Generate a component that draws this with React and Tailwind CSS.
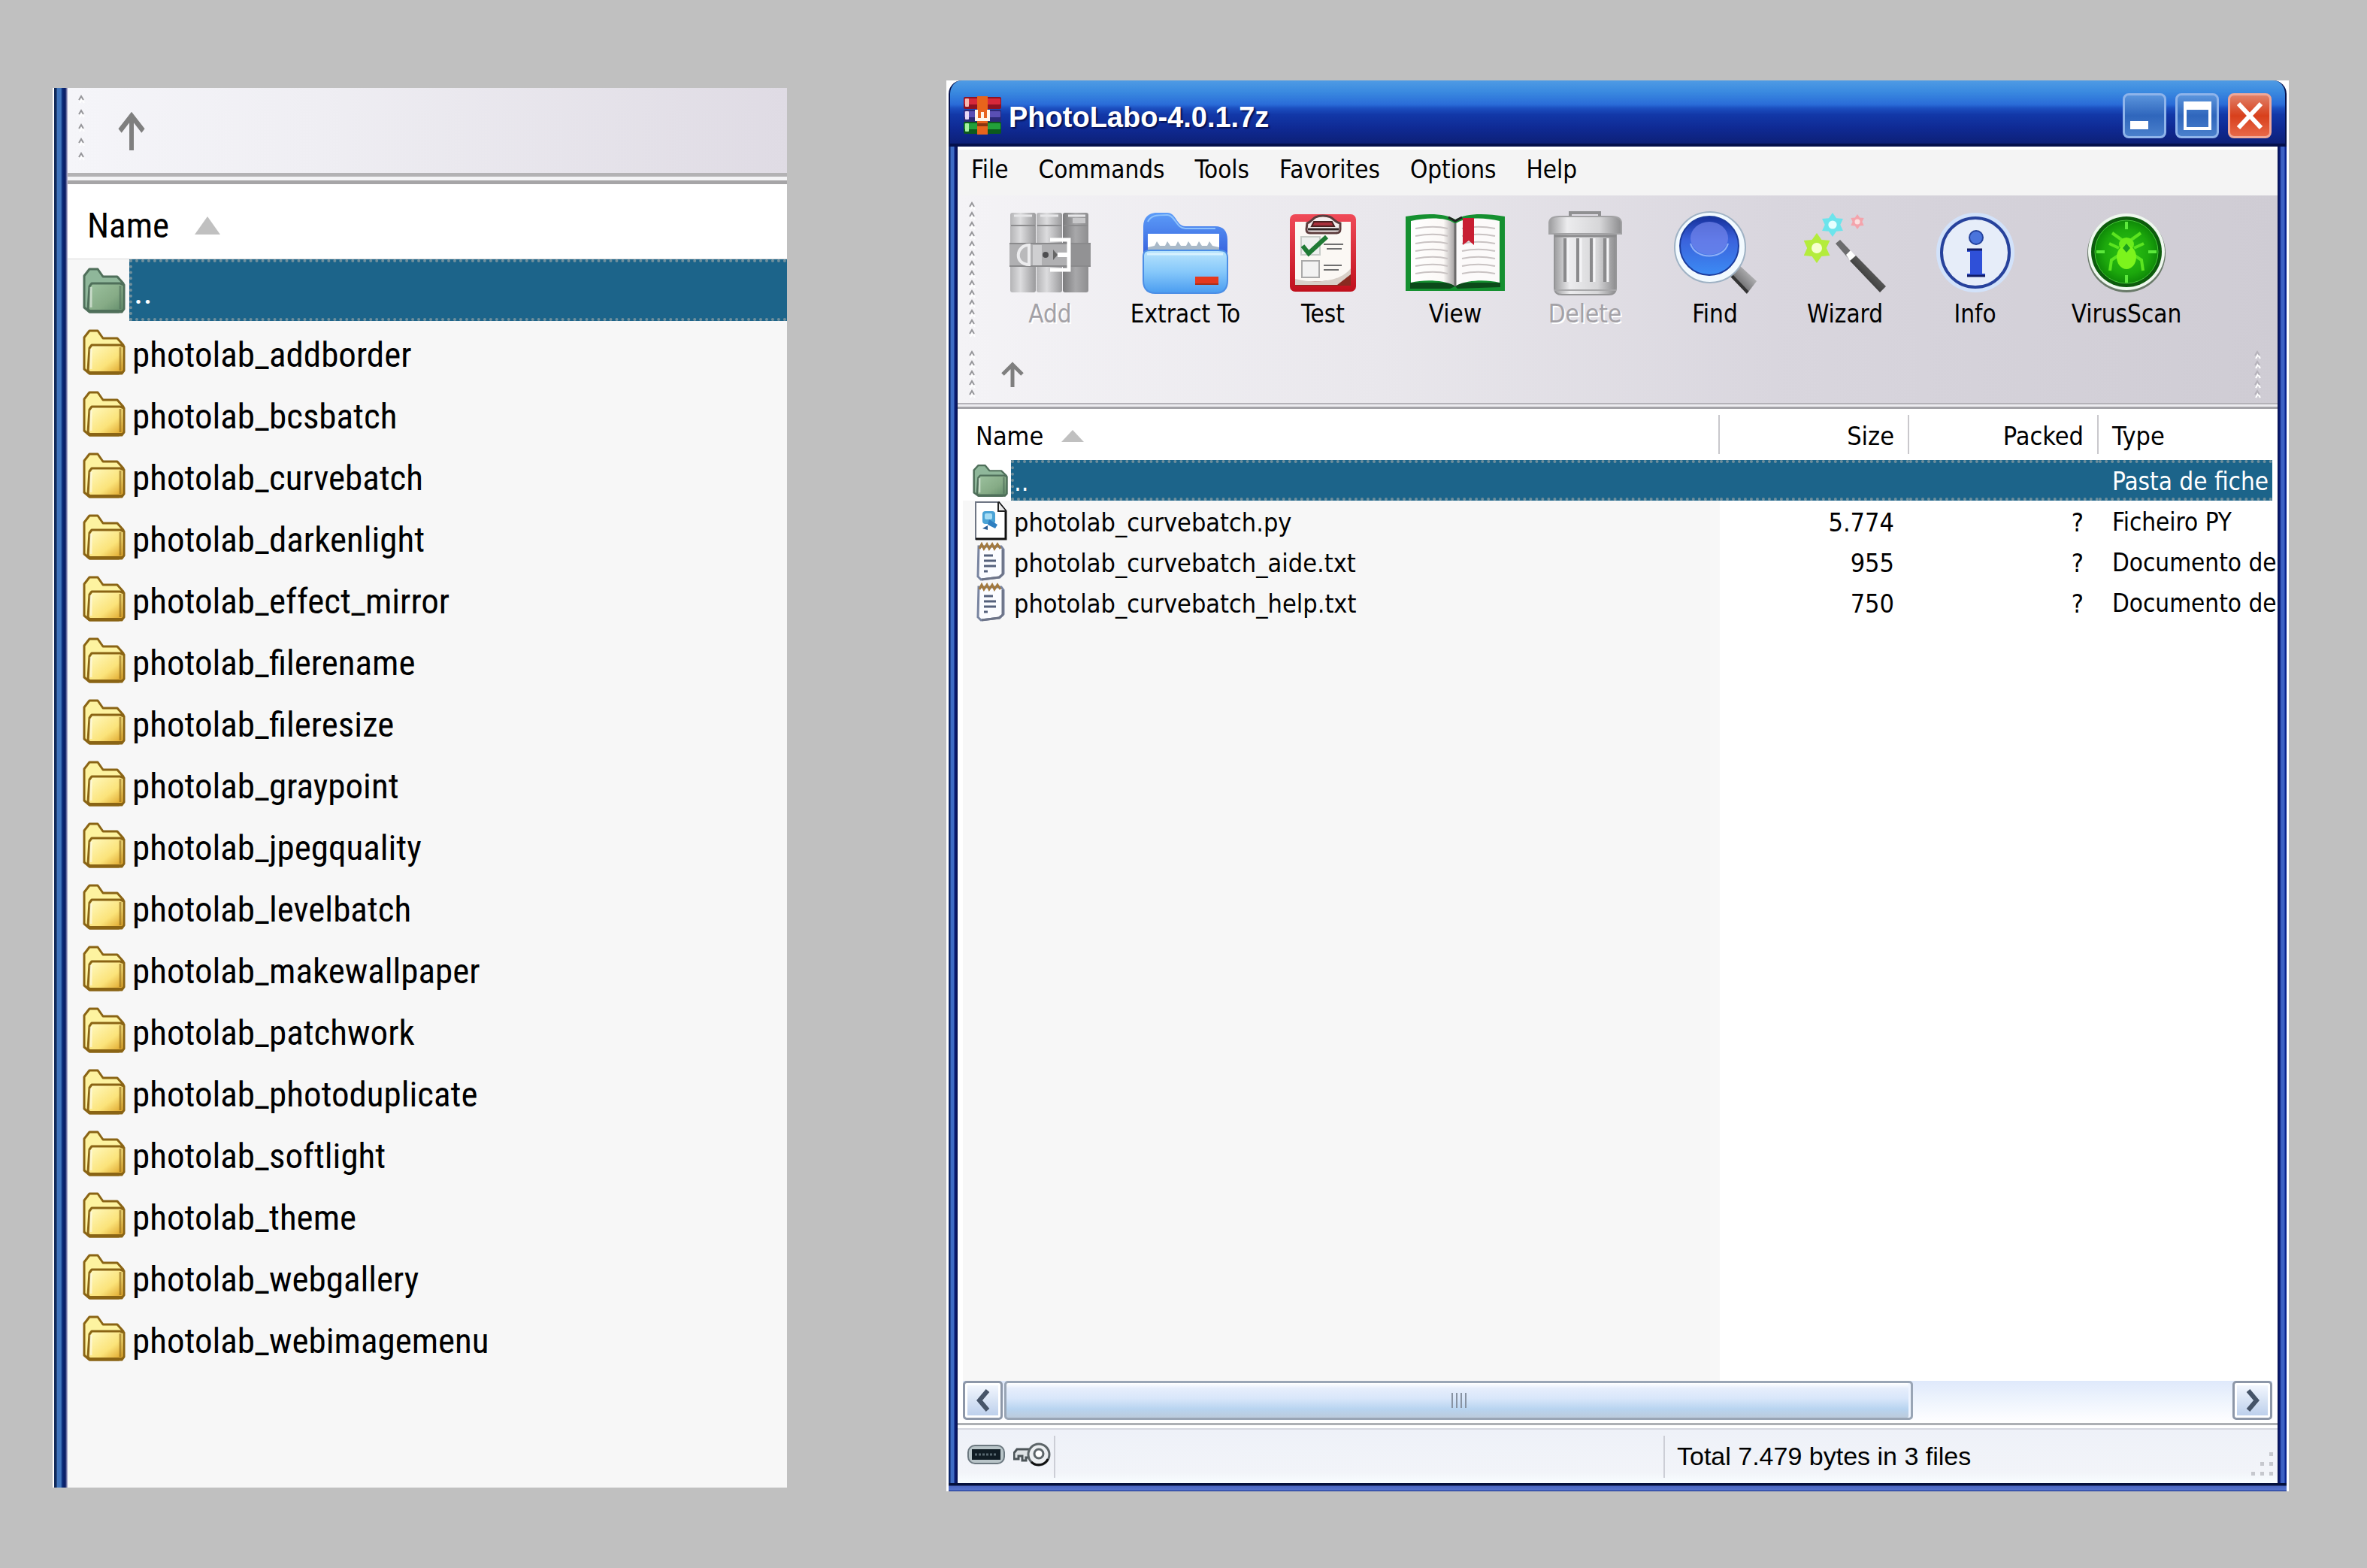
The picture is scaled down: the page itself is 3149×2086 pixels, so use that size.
import React from 'react';

const folders = [
    'photolab_addborder',
    'photolab_bcsbatch',
    'photolab_curvebatch',
    'photolab_darkenlight',
    'photolab_effect_mirror',
    'photolab_filerename',
    'photolab_fileresize',
    'photolab_graypoint',
    'photolab_jpegquality',
    'photolab_levelbatch',
    'photolab_makewallpaper',
    'photolab_patchwork',
    'photolab_photoduplicate',
    'photolab_softlight',
    'photolab_theme',
    'photolab_webgallery',
    'photolab_webimagemenu',
];

const files = [
    { name: 'photolab_curvebatch.py', size: '5.774', type: 'Ficheiro PY', icon: PyIcon },
    { name: 'photolab_curvebatch_aide.txt', size: '955', type: 'Documento de', icon: TxtIcon },
    { name: 'photolab_curvebatch_help.txt', size: '750', type: 'Documento de', icon: TxtIcon },
];

const menus = ['File', 'Commands', 'Tools', 'Favorites', 'Options', 'Help'];

const tools = [
    { label: 'Add', icon: AddIcon, width: 'w-[174px]', disabled: true },
    { label: 'Extract To', icon: ExtractIcon, width: 'w-[186px]' },
    { label: 'Test', icon: TestIcon, width: 'w-[180px]' },
    { label: 'View', icon: ViewIcon, width: 'w-[172px]' },
    { label: 'Delete', icon: DeleteIcon, width: 'w-[173px]', disabled: true },
    { label: 'Find', icon: FindIcon, width: 'w-[173px]' },
    { label: 'Wizard', icon: WizardIcon, width: 'w-[173px]' },
    { label: 'Info', icon: InfoIcon, width: 'w-[173px]' },
    { label: 'VirusScan', icon: VirusIcon, width: 'w-[230px]' },
];

/* ---------- Icons ---------- */

function FolderIcon({ green, width, height }) {
    const id = green ? 'folder-green' : 'folder-yellow';
    const line = green ? '#4f6f5a' : '#8a6414';
    return (
        <svg width={width} height={height} viewBox="0 0 58 62" preserveAspectRatio="none" className="shrink-0">
            <defs>
                <linearGradient id={`${id}-${width}`} x1="0" y1="0" x2="1" y2="1">
                    <stop offset="0" stopColor={green ? '#9dc3a0' : '#fffbc4'} />
                    <stop offset="0.6" stopColor={green ? '#86ab86' : '#fbe37a'} />
                    <stop offset="1" stopColor={green ? '#5f8a68' : '#d99a1c'} />
                </linearGradient>
            </defs>
            <path
                d="M2 54V12L9 3H20L27 13H46L54 22V54L48 60H9Z"
                fill={green ? '#8fb79a' : '#fdf3a0'}
                stroke={line}
                strokeWidth="3"
                strokeLinejoin="round"
            />
            <path
                d="M9 26L12 22H50L55 24V56L52 60H10L7 56Z"
                fill={`url(#${id}-${width})`}
                stroke={line}
                strokeWidth="3"
                strokeLinejoin="round"
            />
            <path d="M50 25V56" stroke={line} strokeWidth="3" opacity="0.6" />
            <path d="M8 59H53" stroke={line} strokeWidth="4" />
            <path d="M11 54V27" stroke="#fff" strokeWidth="3" opacity="0.5" />
        </svg>
    );
}

function PyIcon() {
    return (
        <svg width="44" height="52" viewBox="0 0 44 52" className="shrink-0">
            <path d="M2 1H33L42 12V50H2Z" fill="#fff" stroke="#6f7684" strokeWidth="2" />
            <path d="M32 1L42 13V50H2" fill="none" stroke="#111" strokeWidth="3" />
            <path d="M32 1V13H42" fill="#e8e8e8" stroke="#222" strokeWidth="2" />
            <rect x="11" y="13" width="17" height="17" rx="4" fill="#4aa3d6" />
            <rect x="14" y="16" width="10" height="8" rx="2" fill="#a5dcf4" />
            <path d="M20 24L31 31L28 36L18 31Z" fill="#2f7fc0" />
            <path d="M11 36L18 32V38Z" fill="#2a5d94" />
        </svg>
    );
}

function TxtIcon() {
    return (
        <svg width="44" height="52" viewBox="0 0 44 52" className="shrink-0">
            <path d="M6 6H36L39 10V42L34 47L9 50L5 46Z" fill="#fbfcff" stroke="#7884a0" strokeWidth="3" />
            <path d="M38 10V43L33 47L10 50" fill="none" stroke="#6d7488" strokeWidth="3" />
            <path d="M7 9L10 3L13 9L17 3L20 9L24 3L27 9L31 3L35 9" fill="none" stroke="#a3793d" strokeWidth="3" />
            <path d="M13 18H25M13 25H29M13 32H29M13 39H18" stroke="#55617c" strokeWidth="3" />
        </svg>
    );
}

function UpArrow({ width, height }) {
    return (
        <svg width={width} height={height} viewBox="0 0 32 34" preserveAspectRatio="none">
            <path d="M16 34V4M3 17L16 4L29 17" fill="none" stroke="#7f7f7f" strokeWidth="5" />
        </svg>
    );
}

function SortArrow({ width, height }) {
    return (
        <svg width={width} height={height} viewBox="0 0 32 16" preserveAspectRatio="none">
            <path d="M16 0L32 16H0Z" fill="#c0c0c0" />
        </svg>
    );
}

function Grip({ count, pitch, light }) {
    return (
        <svg width="10" height={count * pitch} className="shrink-0">
            {Array.from({ length: count }, (_, i) => (
                <g key={i} transform={`translate(0 ${i * pitch})`}>
                    <path d="M2 8L5 3L8 8" fill="none" stroke="#fff" strokeWidth="2" transform="translate(1 3)" />
                    <path d="M2 7L5 2L8 7" fill="none" stroke={light ? '#b5b2ba' : '#96969a'} strokeWidth="2" />
                </g>
            ))}
        </svg>
    );
}

function RarIcon() {
    const books = [
        { y: 1, dark: '#8e1222', mid: '#d8283a', tip: '#f7b9b0' },
        { y: 18, dark: '#2c2a78', mid: '#5a4fb4', tip: '#e8d8f4' },
        { y: 34, dark: '#0c5a1c', mid: '#23a03a', tip: '#a8f0a0' },
    ];
    return (
        <svg width="52" height="52" viewBox="0 0 52 52" className="shrink-0">
            {books.map(b => (
                <g key={b.y}>
                    <rect x="1" y={b.y} width="50" height="16" rx="2" fill={b.dark} />
                    <rect x="2" y={b.y + 2} width="48" height="8" rx="1" fill={b.mid} />
                    <rect x="3" y={b.y + 2} width="5" height="11" rx="1" fill={b.tip} />
                </g>
            ))}
            <rect x="19" y="0" width="14" height="51" fill="#e8641c" />
            <rect x="19" y="36" width="14" height="4" fill="#8a3510" />
            <path d="M18 18V31H34V18M26 21V31" fill="none" stroke="#fff6e8" strokeWidth="4" />
        </svg>
    );
}

function AddIcon() {
    return (
        <svg width="108" height="108" viewBox="0 0 108 108">
            <defs>
                <linearGradient id="book-a">
                    <stop offset="0" stopColor="#b4b4b6" />
                    <stop offset="0.4" stopColor="#dcdcde" />
                    <stop offset="1" stopColor="#9a9a9c" />
                </linearGradient>
                <linearGradient id="book-b">
                    <stop offset="0" stopColor="#7c7c7e" />
                    <stop offset="0.5" stopColor="#a8a8aa" />
                    <stop offset="1" stopColor="#8e8e90" />
                </linearGradient>
            </defs>
            <rect x="1" y="1" width="34" height="106" rx="3" fill="url(#book-a)" />
            <rect x="36" y="1" width="34" height="106" rx="3" fill="url(#book-a)" />
            <rect x="71" y="1" width="34" height="106" rx="3" fill="url(#book-b)" />
            <path d="M6 5H30M41 5H65M78 5H101" stroke="#e6e6e8" strokeWidth="3" />
            <path d="M2 18H34M37 18H69M72 18H104" stroke="#8c8c8e" strokeWidth="2" />
            <path d="M84 8H101V15H84Z" fill="#c8c8ca" />
            <rect x="0" y="41" width="108" height="32" fill="#b0b0b2" />
            <rect x="80" y="42" width="28" height="30" fill="#929294" />
            <path d="M0 42H108M0 72H108" stroke="#8a8a8c" strokeWidth="2" />
            <path d="M26 44C8 44 6 70 26 70Z" fill="#b9b9bb" stroke="#ececee" strokeWidth="4" />
            <rect x="31" y="44" width="12" height="27" fill="#cfcfd1" />
            <circle cx="48" cy="57" r="4" fill="#4e4e50" />
            <path d="M54 37H79V77H54" fill="none" stroke="#fff" strokeWidth="5" />
            <path d="M64 57H79" stroke="#fff" strokeWidth="6" />
            <path d="M58 50L64 57L58 64Z" fill="#666" />
        </svg>
    );
}

function ExtractIcon() {
    return (
        <svg width="116" height="110" viewBox="0 0 116 110">
            <defs>
                <linearGradient id="ex-back" x2="0" y2="1">
                    <stop offset="0" stopColor="#5c9cf8" />
                    <stop offset="1" stopColor="#2f55d8" />
                </linearGradient>
                <linearGradient id="ex-front" x2="0" y2="1">
                    <stop offset="0" stopColor="#b8e4fc" />
                    <stop offset="0.5" stopColor="#86c8fa" />
                    <stop offset="1" stopColor="#4a9cf0" />
                </linearGradient>
            </defs>
            <path d="M2 70V20C2 8 10 2 20 2H34C46 2 46 20 58 20H98C108 20 114 26 114 38V70Z" fill="url(#ex-back)" />
            <path d="M8 14C12 6 18 5 34 5C44 5 46 23 58 23H98" fill="none" stroke="#8ec2fc" strokeWidth="2" />
            <path d="M8 30H103V58H8Z" fill="#fff" />
            <path d="M8 52V48L17 46L20 40L24 46H31L34 40L38 46H45L48 40L52 46H59L62 40L66 46H73L76 40L80 46H87L90 40L94 46L103 48V52Z" fill="#a9b9c8" />
            <path d="M2 60C2 53 6 52 12 52H102C110 52 114 54 114 62V92C114 104 108 109 98 109H18C8 109 2 104 2 92Z" fill="url(#ex-front)" stroke="#4b8ee6" strokeWidth="2" />
            <path d="M7 57H108" stroke="#d8f2ff" strokeWidth="3" />
            <rect x="71" y="87" width="31" height="11" fill="#e4381e" />
            <path d="M71 97H102" stroke="#a8301c" strokeWidth="2" />
        </svg>
    );
}

function TestIcon() {
    return (
        <svg width="90" height="106" viewBox="0 0 90 106">
            <defs>
                <linearGradient id="clip-red" x2="0" y2="1">
                    <stop offset="0" stopColor="#f04a58" />
                    <stop offset="1" stopColor="#c0101c" />
                </linearGradient>
            </defs>
            <rect x="1" y="2" width="88" height="103" rx="7" fill="url(#clip-red)" />
            <path d="M8 12H82V78L62 96H8Z" fill="#fbf8f4" />
            <path d="M82 78C70 88 66 92 8 92V97H82Z" fill="#8a2a20" />
            <path d="M8 88C40 96 70 90 82 74V82L64 96H8Z" fill="#d8d0c8" />
            <rect x="16" y="32" width="25" height="24" fill="#eef0ee" stroke="#c8ccc8" strokeWidth="2" />
            <path d="M18 44L26 54L50 32" fill="none" stroke="#1f7a34" strokeWidth="6" />
            <rect x="17" y="64" width="23" height="22" fill="#f2f2f2" stroke="#aaa" strokeWidth="2" />
            <path d="M46 42H72M50 48H70M46 70H70M46 76H66" stroke="#6f6f6f" strokeWidth="2" />
            <path d="M24 14C32 12 30 4 45 4S58 12 68 14V22C68 26 66 27 62 27H30C24 27 23 26 23 22Z" fill="#f4eeee" stroke="#5c3c3c" strokeWidth="3" />
            <path d="M33 12H57L60 18H30Z" fill="#a8303c" stroke="#4a2020" strokeWidth="2" />
            <path d="M25 22H66" stroke="#2e2424" strokeWidth="3" />
        </svg>
    );
}

function ViewIcon() {
    const lines = [20, 30, 40, 50, 60, 70, 80];
    return (
        <svg width="134" height="104" viewBox="0 0 134 104">
            <defs>
                <linearGradient id="page-l">
                    <stop offset="0" stopColor="#fff" />
                    <stop offset="0.75" stopColor="#fbf8f6" />
                    <stop offset="1" stopColor="#a8a4a4" />
                </linearGradient>
            </defs>
            <path d="M1 4C30 -1 55 0 67 8C80 0 105 -1 133 4V103H1Z" fill="#159030" />
            <path d="M7 92H127V98L70 100L67 97L60 100H7Z" fill="#0c4a1a" />
            <path d="M8 10C30 5 55 5 66 13V96C50 88 25 88 8 92Z" fill="url(#page-l)" />
            <path d="M68 13C80 5 105 5 126 10V92C108 88 85 88 68 96Z" fill="#fcfafa" />
            <path d="M67 13V97" stroke="#6c6a6a" strokeWidth="3" />
            {lines.map(y => (
                <path key={y} d={`M14 ${y}C30 ${y - 3} 45 ${y - 3} 57 ${y}M76 ${y}C90 ${y - 3} 105 ${y - 3} 120 ${y}`} fill="none" stroke="#c9c3c3" strokeWidth="2" />
            ))}
            <path d="M58 5L67 10L76 5" fill="none" stroke="#222" strokeWidth="3" />
            <path d="M77 6H92V42L85 36L77 42Z" fill="#c81e32" />
        </svg>
    );
}

function DeleteIcon() {
    return (
        <svg width="98" height="114" viewBox="0 0 98 114">
            <defs>
                <linearGradient id="bin">
                    <stop offset="0" stopColor="#9c9c9e" />
                    <stop offset="0.25" stopColor="#ececee" />
                    <stop offset="0.7" stopColor="#d6d6d8" />
                    <stop offset="1" stopColor="#8c8c8e" />
                </linearGradient>
            </defs>
            <path d="M29 8V4H68V8" fill="none" stroke="#909092" strokeWidth="4" />
            <path d="M8 32H90V104C90 110 86 113 80 113H18C12 113 8 110 8 104Z" fill="url(#bin)" stroke="#949496" strokeWidth="2" />
            <path d="M1 32V18C1 11 6 9 14 9H84C92 9 97 11 97 18V32Z" fill="url(#bin)" stroke="#a2a2a4" strokeWidth="2" />
            <path d="M8 35H90" stroke="#8a8a8c" strokeWidth="3" />
            <path d="M22 38V96M39 38V96M57 38V96M75 38V96" stroke="#8a8a8c" strokeWidth="4" />
            <path d="M26 38V96M43 38V96M61 38V96M79 38V96" stroke="#f4f4f6" strokeWidth="3" />
            <path d="M8 107H90" stroke="#a8a8aa" strokeWidth="2" />
        </svg>
    );
}

function FindIcon() {
    return (
        <svg width="114" height="112" viewBox="0 0 114 112">
            <defs>
                <linearGradient id="lens" x2="0" y2="1">
                    <stop offset="0" stopColor="#16309c" />
                    <stop offset="0.4" stopColor="#3a62dc" />
                    <stop offset="1" stopColor="#3c8cf4" />
                </linearGradient>
                <linearGradient id="handle" x1="0" y1="1" x2="1" y2="0">
                    <stop offset="0" stopColor="#333" />
                    <stop offset="0.5" stopColor="#8a8a8c" />
                    <stop offset="1" stopColor="#dcdcde" />
                </linearGradient>
            </defs>
            <path d="M76 84L88 72L112 94L99 111Z" fill="url(#handle)" />
            <path d="M78 86L100 109" stroke="#333" strokeWidth="4" />
            <circle cx="50" cy="49" r="47" fill="#f2faff" stroke="#9fb2c4" strokeWidth="2" />
            <circle cx="49" cy="47" r="39" fill="url(#lens)" stroke="#1c3c9c" strokeWidth="2" />
            <ellipse cx="49" cy="37" rx="25" ry="22" fill="#7486ec" opacity="0.7" />
            <path d="M24 44C30 66 68 66 74 44" fill="none" stroke="#8fb0f8" strokeWidth="2" />
        </svg>
    );
}

function Star({ x, y, r, color, core }) {
    return (
        <g transform={`translate(${x} ${y}) scale(${r})`}>
            <path d="M0 -1L0.32 -0.55L0.87 -0.5L0.64 0L0.87 0.5L0.32 0.55L0 1L-0.32 0.55L-0.87 0.5L-0.64 0L-0.87 -0.5L-0.32 -0.55Z" fill={color} />
            <circle r="0.35" fill={core} />
        </g>
    );
}

function WizardIcon() {
    return (
        <svg width="110" height="108" viewBox="0 0 110 108">
            <defs>
                <linearGradient id="wand" x1="0" y1="1" x2="1" y2="0">
                    <stop offset="0" stopColor="#0c0c0c" />
                    <stop offset="1" stopColor="#8c8c8c" />
                </linearGradient>
            </defs>
            <Star x="17" y="48" r="20" color="#b4ec3c" core="#f6ffd0" />
            <Star x="38" y="17" r="16" color="#6ce4ec" core="#e4ffff" />
            <Star x="71" y="13" r="10" color="#f4a4ac" core="#fbe0e0" />
            <path d="M42 42L48 37L66 56L60 63Z" fill="#6c6c6e" />
            <path d="M56 57L62 51L69 59L62 66Z" fill="#fff" />
            <path d="M61 65L69 58L109 99L101 107Z" fill="url(#wand)" />
        </svg>
    );
}

function InfoIcon() {
    return (
        <svg width="106" height="108" viewBox="0 0 106 108">
            <ellipse cx="53" cy="54" rx="52" ry="53" fill="#d2e2fa" />
            <ellipse cx="53" cy="54" rx="45" ry="46" fill="#e6edf9" stroke="#27429c" strokeWidth="4" />
            <circle cx="54" cy="34" r="9" fill="#4a74dc" stroke="#24429c" strokeWidth="2" />
            <path d="M42 49H62V82H66V86H42V82H46V53H42Z" fill="#2f50d8" />
            <path d="M42 50H62M42 85H66" stroke="#101c68" strokeWidth="3" />
        </svg>
    );
}

function VirusIcon() {
    return (
        <svg width="106" height="108" viewBox="0 0 106 108">
            <defs>
                <radialGradient id="virus">
                    <stop offset="0" stopColor="#2cc414" />
                    <stop offset="0.7" stopColor="#1ca80c" />
                    <stop offset="1" stopColor="#0f8a08" />
                </radialGradient>
            </defs>
            <circle cx="53" cy="55" r="52" fill="#6a7a6a" />
            <circle cx="53" cy="53" r="51" fill="#eef8ee" />
            <circle cx="53" cy="53" r="47" fill="#0c5c0c" />
            <circle cx="53" cy="53" r="42" fill="url(#virus)" stroke="#46c438" strokeWidth="1" />
            <path d="M53 13V23M53 84V94M13 53H24M82 53H93" stroke="#5ce83c" strokeWidth="4" />
            <g fill="none" stroke="#5ce420" strokeWidth="4">
                <path d="M48 38L34 28M58 38L72 28M43 48L30 42M63 48L76 42M42 58L33 64L31 78M64 58L73 64L75 78" />
            </g>
            <ellipse cx="53" cy="43" rx="10" ry="9" fill="#6cec1c" />
            <ellipse cx="53" cy="60" rx="13" ry="16" fill="#7cf41c" />
            <path d="M53 42L58 48L53 54L48 48Z" fill="#1ca01c" />
        </svg>
    );
}

/* ---------- Left panel ---------- */

function FolderPanel() {
    return (
        <section className="mt-[10px] mb-[5px] flex min-w-0 overflow-hidden border-l-2 border-white bg-[#f7f7f7] font-['Roboto_Condensed',sans-serif] text-[47px]">
            <div className="w-[18px] shrink-0 bg-[linear-gradient(to_right,#10295a_0,#10295a_3px,#3f74bc_4px,#3f74bc_9px,#0a2a78_11px,#0a1c64_15px,#c9c4dc_18px)]" />
            <div className="min-w-0 flex-1">
                <div className="flex h-[113px] items-center bg-[linear-gradient(to_right,#f5f5f9,#efeef3_35%,#dfdbe4)] pl-[13px]">
                    <Grip count={5} pitch={19} />
                    <button aria-label="Up one level" className="ml-[43px]">
                        <UpArrow width={38} height={52} />
                    </button>
                </div>
                <div className="h-[15px] border-y-[5px] border-t-[#b3b2b4] border-b-[#a6a5a7] bg-[#f4f4f6]" />
                <table className="w-full table-fixed border-separate border-spacing-0">
                    <thead>
                        <tr className="bg-white">
                            <th className="h-[100px] border-b border-[#d8d8d8] p-0 pt-[10px] pl-[26px] text-left font-normal">
                                <div className="flex items-center gap-[34px] leading-[86px]">
                                    Name
                                    <SortArrow width={34} height={24} />
                                </div>
                            </th>
                        </tr>
                    </thead>
                    <tbody>
                        <tr>
                            <td className="p-0 pl-[20px]">
                                <div className="flex items-center">
                                    <FolderIcon green width={58} height={62} />
                                    <div className="ml-1 h-[82px] flex-1 border-y-4 border-l-4 border-dotted border-[#6f8f9c] bg-[#1c648a] pt-1 pl-0.5 leading-[70px] text-white">
                                        ..
                                    </div>
                                </div>
                            </td>
                        </tr>
                        {folders.map(name => (
                            <tr key={name}>
                                <td className="p-0 pl-[20px]">
                                    <div className="flex h-[82px] items-center">
                                        <FolderIcon width={58} height={62} />
                                        <span className="ml-2 pt-2 leading-[74px]">{name}</span>
                                    </div>
                                </td>
                            </tr>
                        ))}
                    </tbody>
                </table>
            </div>
        </section>
    );
}

/* ---------- Archive window ---------- */

function TitleBar() {
    return (
        <header className="flex h-[88px] items-center gap-[9px] rounded-t-[18px] border-x-2 border-b-4 border-[#04104c] bg-[linear-gradient(to_bottom,#4f9be4_0%,#3a8ae0_18%,#2a6cd8_38%,#1c4fc0_44%,#1238a8_54%,#0f2a94_75%,#0d2078_100%)] pt-[10px] pr-[18px] pl-[17px]">
            <RarIcon />
            <h1 className="flex-1 pt-1 font-['Liberation_Sans',Arial,sans-serif] text-[38px] leading-[48px] font-bold text-white [text-shadow:2px_2px_2px_#061050]">
                PhotoLabo-4.0.1.7z
            </h1>
            <div className="flex gap-[12px]">
                <button aria-label="Minimize" className="flex h-[60px] w-[58px] items-end rounded-[8px] border-[3px] border-[#8fb4ea] bg-[linear-gradient(to_bottom,#5a94dc,#2f66bc_50%,#4a80cc)] pb-[9px] pl-[7px]">
                    <span className="h-[11px] w-[24px] bg-white" />
                </button>
                <button aria-label="Maximize" className="flex h-[60px] w-[58px] items-center justify-center rounded-[8px] border-[3px] border-[#8fb4ea] bg-[linear-gradient(to_bottom,#5a94dc,#2f66bc_50%,#4a80cc)]">
                    <span className="h-[38px] w-[37px] border-4 border-t-[11px] border-white" />
                </button>
                <button aria-label="Close" className="flex h-[60px] w-[58px] items-center justify-center rounded-[8px] border-[3px] border-[#f0a898] bg-[linear-gradient(to_bottom,#e08068,#d8401c_50%,#e86848)]">
                    <svg width="36" height="38" viewBox="0 0 36 38">
                        <path d="M3 3L33 35M33 3L3 35" stroke="#fff" strokeWidth="6" />
                    </svg>
                </button>
            </div>
        </header>
    );
}

function ToolBar() {
    return (
        <div className="bg-[linear-gradient(to_right,#f4f3f6,#e9e7ec_32%,#d9d6de_62%,#cfccd4)]">
            <div className="flex h-[200px] gap-[12px] pl-[14px]">
                <div className="pt-[8px]">
                    <Grip count={14} pitch={13} />
                </div>
                <div className="flex">
                    {tools.map(({ label, icon: Icon, width, disabled }) => (
                        <button
                            key={label}
                            disabled={disabled}
                            className={`flex flex-col items-center pt-[20px] text-[33px] leading-[40px] ${width} ${disabled ? 'text-[#a3a1a6] [text-shadow:2px_2px_0_#fff]' : 'text-black'}`}
                        >
                            <span className="mb-[6px] flex h-[112px] items-center">
                                <Icon />
                            </span>
                            {label}
                        </button>
                    ))}
                </div>
            </div>
            <div className="flex h-[76px] items-center pr-[22px] pl-[14px]">
                <Grip count={5} pitch={13} />
                <button aria-label="Up one level" className="ml-[33px]">
                    <UpArrow width={32} height={34} />
                </button>
                <div className="ml-auto">
                    <Grip count={5} pitch={13} light />
                </div>
            </div>
            <div className="h-[8px] border-t-2 border-b-[3px] border-t-[#b4b2b8] border-b-[#a4a3a8] bg-[#ecebef]" />
        </div>
    );
}

function FileTable() {
    const head = 'my-2 flex h-[52px] items-center pt-1';
    const picked = 'h-[54px] border-y-4 border-dotted border-[#6f8f9c] bg-[#1c648a] p-0 pt-1 leading-[42px] text-white';
    const cell = 'h-[54px] p-0 pt-1 leading-[50px]';
    return (
        <div className="flex-1 px-[7px]">
            <table className="h-full w-full table-fixed border-separate border-spacing-0 text-[34px] whitespace-nowrap">
                <colgroup>
                    <col />
                    <col className="w-[252px]" />
                    <col className="w-[252px]" />
                    <col className="w-[231px]" />
                </colgroup>
                <thead>
                    <tr className="text-left">
                        <th className="h-[68px] p-0 font-normal">
                            <div className={`${head} gap-[24px] border-r-2 border-[#c9c8cc] pl-[17px]`}>
                                Name
                                <SortArrow width={30} height={16} />
                            </div>
                        </th>
                        <th className="p-0 font-normal">
                            <div className={`${head} justify-end border-r-2 border-[#c9c8cc] pr-[18px]`}>Size</div>
                        </th>
                        <th className="p-0 font-normal">
                            <div className={`${head} justify-end border-r-2 border-[#c9c8cc] pr-[18px]`}>Packed</div>
                        </th>
                        <th className="p-0 font-normal">
                            <div className={`${head} pl-[18px]`}>Type</div>
                        </th>
                    </tr>
                </thead>
                <tbody>
                    <tr>
                        <td className="p-0">
                            <div className="flex items-center pl-[13px]">
                                <FolderIcon green width={48} height={44} />
                                <div className="ml-[3px] h-[54px] flex-1 border-y-4 border-l-4 border-dotted border-[#6f8f9c] bg-[#1c648a] pt-1 leading-[42px] text-white">
                                    ..
                                </div>
                            </div>
                        </td>
                        <td className={picked}></td>
                        <td className={picked}></td>
                        <td className={`${picked} pl-[18px] text-[33px]`}>Pasta de fiche</td>
                    </tr>
                    {files.map(({ name, size, type, icon: Icon }) => (
                        <tr key={name}>
                            <td className="h-[54px] bg-[#f7f7f7] p-0">
                                <div className="flex h-[54px] items-center gap-[9px] pl-[15px]">
                                    <Icon />
                                    <span className="pt-1 leading-[50px]">{name}</span>
                                </div>
                            </td>
                            <td className={`${cell} pr-[20px] text-right`}>{size}</td>
                            <td className={`${cell} pr-[20px] text-right`}>?</td>
                            <td className={`${cell} pl-[18px] text-[33px]`}>{type}</td>
                        </tr>
                    ))}
                    {/* Sorted column stays shaded down to the scroll bar */}
                    <tr>
                        <td className="h-full bg-[#f7f7f7] p-0"></td>
                    </tr>
                </tbody>
            </table>
        </div>
    );
}

function ScrollBar() {
    const arrow = 'flex w-[53px] shrink-0 items-center justify-center rounded-[5px] border-[3px] border-[#8d97a8] bg-[linear-gradient(to_bottom,#f6f9ff,#b9cdea)] shadow-[inset_0_0_0_3px_#fff]';
    return (
        <div className="mx-[7px] flex h-[52px] bg-[linear-gradient(to_bottom,#dfe9fb,#eef4fd_50%,#fdfdff)]">
            <button aria-label="Scroll left" className={arrow}>
                <svg width="20" height="30" viewBox="0 0 20 30">
                    <path d="M16 2L5 15L16 28" fill="none" stroke="#465468" strokeWidth="6" />
                </svg>
            </button>
            <div className="ml-[2px] flex flex-1">
                <div className="flex w-[74%] items-center justify-center gap-[4px] rounded-[5px] border-[3px] border-[#99a5b5] bg-[linear-gradient(to_bottom,#ffffff_0%,#e6eefc_15%,#d8e6fa_45%,#b8d4f0_75%,#bccbdc_100%)] shadow-[inset_-3px_0_0_#eef4ff]">
                    <span className="h-[20px] w-[2px] bg-[#8792a2]" />
                    <span className="h-[20px] w-[2px] bg-[#8792a2]" />
                    <span className="h-[20px] w-[2px] bg-[#8792a2]" />
                    <span className="h-[20px] w-[2px] bg-[#8792a2]" />
                </div>
            </div>
            <button aria-label="Scroll right" className={arrow}>
                <svg width="20" height="30" viewBox="0 0 20 30">
                    <path d="M4 2L15 15L4 28" fill="none" stroke="#465468" strokeWidth="6" />
                </svg>
            </button>
        </div>
    );
}

function StatusBar() {
    return (
        <footer className="mt-[4px] border-t-[3px] border-[#adb0b4] bg-white pt-[4px]">
            <div className="flex h-[73px] items-center border-t-2 border-[#d6d8e0] bg-[linear-gradient(to_bottom,#eef1f8,#f2f4f9_80%,#f8fdff)]">
                <div className="flex h-[56px] w-[130px] items-center gap-[11px] border-r-2 border-[#ccced6] pb-[6px] pl-[13px]">
                    <svg width="50" height="26" viewBox="0 0 50 26">
                        <rect x="1" y="1" width="48" height="24" rx="9" fill="#b8c4c8" stroke="#6c7880" strokeWidth="2" />
                        <rect x="6" y="6" width="38" height="14" fill="#101c24" />
                        <path d="M10 13H40" stroke="#586870" strokeWidth="3" strokeDasharray="3 2" />
                    </svg>
                    <svg width="50" height="32" viewBox="0 0 50 32">
                        <path d="M22 9H5L1 14V22H7V18H12V24H17V20H24" fill="#dfe3e6" stroke="#4c5458" strokeWidth="3" />
                        <circle cx="34" cy="16" r="14" fill="#eceff2" stroke="#5c6468" strokeWidth="3" />
                        <path d="M24 26C30 32 42 31 46 22" fill="none" stroke="#101010" strokeWidth="3" />
                        <circle cx="34" cy="15" r="6" fill="#fff" stroke="#5c6468" strokeWidth="3" />
                    </svg>
                </div>
                <div className="flex-1" />
                <div className="flex h-[56px] w-[817px] items-center justify-between border-l-2 border-[#ccced6] pr-[4px] pl-[16px]">
                    <p className="font-['Liberation_Sans',Arial,sans-serif] text-[34px]">Total 7.479 bytes in 3 files</p>
                    <svg width="34" height="36" viewBox="0 0 34 36" className="self-end">
                        <path d="M27 2h5v5h-5zM15 15h5v5h-5zM27 15h5v5h-5zM3 28h5v5h-5zM15 28h5v5h-5zM27 28h5v5h-5z" fill="#c6c8ce" />
                    </svg>
                </div>
            </div>
        </footer>
    );
}

function ArchiveWindow() {
    return (
        <main className="flex min-w-0 flex-col bg-white px-[3px] font-['DejaVu_Sans_Condensed','DejaVu_Sans',sans-serif]">
            <TitleBar />
            <div className="flex flex-1">
                <div className="w-[12px] shrink-0 bg-[linear-gradient(to_right,#0a2468_0,#0a2468_2px,#3e6cc4_3px,#3e6cc4_7px,#0a1c78_8px,#06104c_12px)]" />
                <div className="flex min-w-0 flex-1 flex-col bg-white">
                    <nav className="flex h-[65px] items-center gap-[40px] border-t-4 border-white bg-[#f4f4f4] pb-[8px] pl-[18px] text-[33px]">
                        {menus.map(menu => (
                            <button key={menu}>{menu}</button>
                        ))}
                    </nav>
                    <ToolBar />
                    <FileTable />
                    <ScrollBar />
                    <StatusBar />
                </div>
                <div className="w-[12px] shrink-0 bg-[linear-gradient(to_right,#06104c_0,#0a1c78_3px,#3e62c4_5px,#3e62c4_9px,#0a2490_10px,#0a2490_12px)]" />
            </div>
            <div className="h-[11px] bg-[linear-gradient(to_bottom,#04103c_0,#04103c_3px,#4a66c0_4px,#5674cc_9px,#16308c_11px)]" />
        </main>
    );
}

export default function App() {
    return (
        <div className="grid min-h-screen grid-cols-[977fr_1786fr] gap-[212px] bg-[#c0c0c0] pt-[107px] pr-[104px] pb-[102px] pl-[70px] text-black">
            <FolderPanel />
            <ArchiveWindow />
        </div>
    );
}
